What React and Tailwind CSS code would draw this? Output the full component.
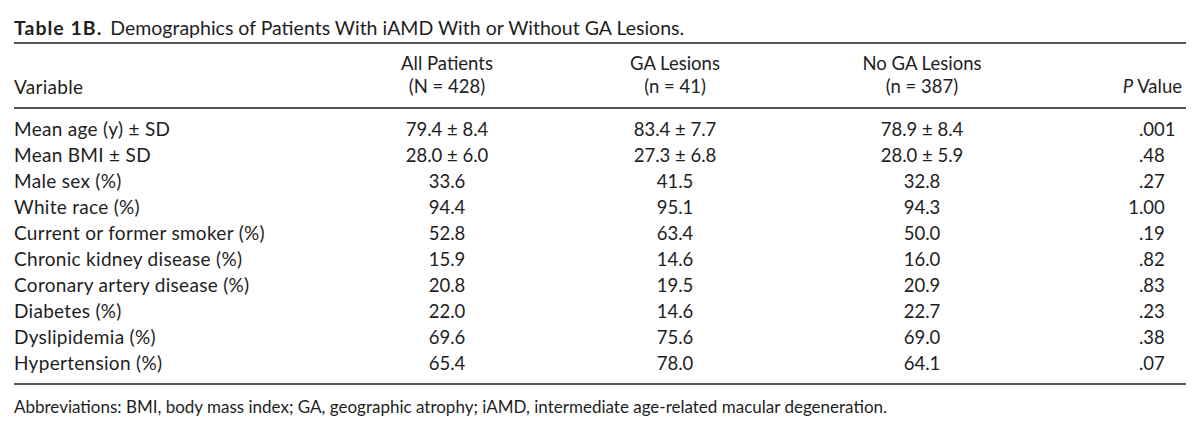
import React from "react";

const rows = [
  ["Mean age (y) ± SD", "79.4 ± 8.4", "83.4 ± 7.7", "78.9 ± 8.4", "", ".001"],
  ["Mean BMI ± SD", "28.0 ± 6.0", "27.3 ± 6.8", "28.0 ± 5.9", "", ".48"],
  ["Male sex (%)", "33.6", "41.5", "32.8", "", ".27"],
  ["White race (%)", "94.4", "95.1", "94.3", "1", ".00"],
  ["Current or former smoker (%)", "52.8", "63.4", "50.0", "", ".19"],
  ["Chronic kidney disease (%)", "15.9", "14.6", "16.0", "", ".82"],
  ["Coronary artery disease (%)", "20.8", "19.5", "20.9", "", ".83"],
  ["Diabetes (%)", "22.0", "14.6", "22.7", "", ".23"],
  ["Dyslipidemia (%)", "69.6", "75.6", "69.0", "", ".38"],
  ["Hypertension (%)", "65.4", "78.0", "64.1", "", ".07"],
];

const cols = "grid grid-cols-[316px_234px_222px_272px_128px]";

const Rule = () => <div className="h-[2px] bg-[#555]" />;

const App = () => (
  <div
    className="w-[1200px] h-[430px] bg-white px-[14px] text-[#1e1e1e] text-[18.5px]"
    style={{ fontFamily: "Lato, 'Open Sans', sans-serif" }}
  >
    <div className="pt-[16px] leading-[24px] text-[19.5px] whitespace-nowrap">
      <span className="font-bold tracking-[1px]">Table 1B.</span>
      <span className="ml-[8px]">Demographics of Patients With iAMD With or Without GA Lesions.</span>
    </div>
    <div className="mt-[2px]">
      <Rule />
    </div>

    <div className={`${cols} pt-[8px] pb-[9px] leading-[23px] items-end`}>
      <div className="text-[19px] tracking-[0.3px]">Variable</div>
      <div className="text-center">
        <div>All Patients</div>
        <div>(N = 428)</div>
      </div>
      <div className="text-center">
        <div>GA Lesions</div>
        <div>(n = 41)</div>
      </div>
      <div className="text-center">
        <div>No GA Lesions</div>
        <div>(n = 387)</div>
      </div>
      <div className="text-right pr-[4px]">
        <span className="italic">P</span> Value
      </div>
    </div>
    <Rule />

    <div className="pt-[7px] pb-[7px]">
      {rows.map((r) => (
        <div key={r[0]} className={`${cols} h-[26px] leading-[26px]`}>
          <div className="text-[19px] tracking-[0.3px] whitespace-nowrap">{r[0]}</div>
          <div className="text-center">{r[1]}</div>
          <div className="text-center">{r[2]}</div>
          <div className="text-center">{r[3]}</div>
          <div className="flex">
            <span className="w-[81px] text-right">{r[4]}</span>
            <span>{r[5]}</span>
          </div>
        </div>
      ))}
    </div>
    <Rule />

    <div className="mt-[11px] leading-[22px] text-[17px]">
      Abbreviations: BMI, body mass index; GA, geographic atrophy; iAMD, intermediate age-related macular degeneration.
    </div>
  </div>
);

export default App;
